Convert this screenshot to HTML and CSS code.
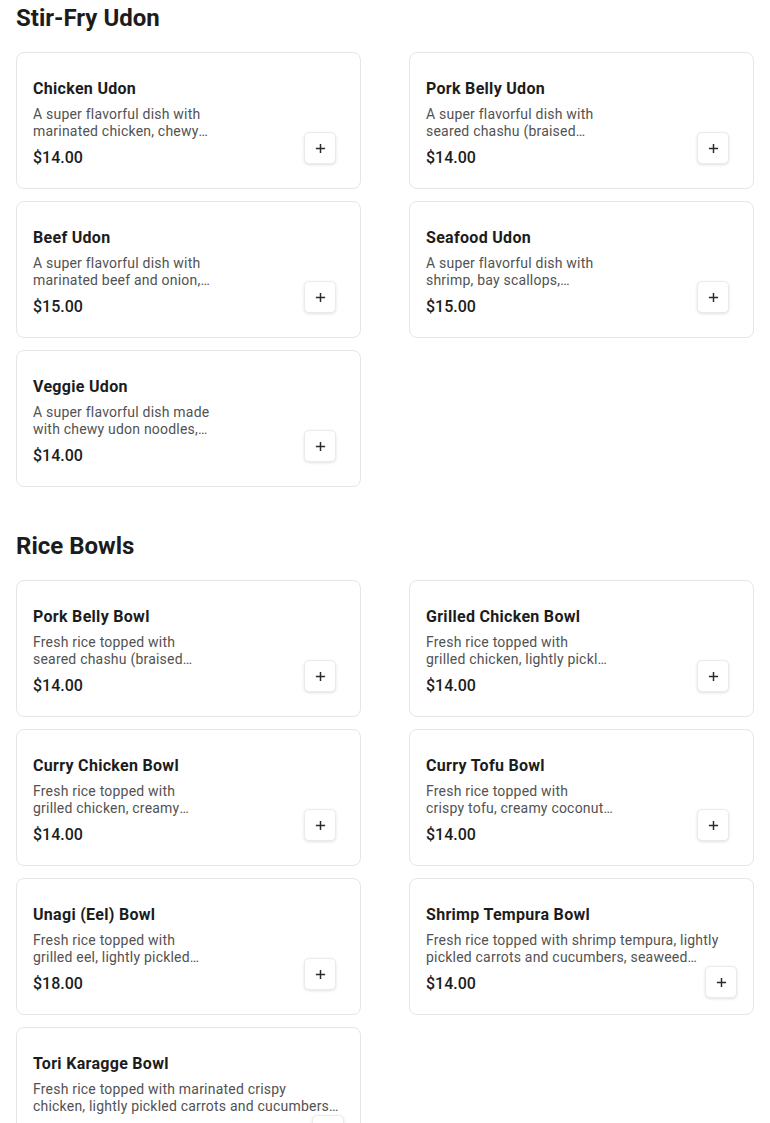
FILE: index.html
```html
<!DOCTYPE html>
<html lang="en">
<head>
<meta charset="utf-8">
<title>Menu</title>
<link rel="stylesheet" href="styles.css">
</head>
<body>
<main class="menu">
  <section class="category">
    <h2 class="category-title">Stir-Fry Udon</h2>
    <div class="item-grid">
      <article class="item-card">
        <div class="item-info">
          <h3 class="item-name">Chicken Udon</h3>
          <p class="item-desc">A super flavorful dish with marinated chicken, chewy udon&nbsp;noodles, cabbage, carrots and onions stir-fried in our savory house sauce.</p>
          <p class="item-price">$14.00</p>
        </div>
        <div class="item-media"><button class="add-btn" aria-label="Add Chicken Udon"><svg viewBox="0 0 12 12" width="11" height="11"><path d="M6 1v10M1 6h10"/></svg></button></div>
      </article>
      <article class="item-card">
        <div class="item-info">
          <h3 class="item-name">Pork Belly Udon</h3>
          <p class="item-desc">A super flavorful dish with seared&nbsp;chashu (braised pork&nbsp;belly), chewy udon noodles, cabbage, carrots and onions.</p>
          <p class="item-price">$14.00</p>
        </div>
        <div class="item-media"><button class="add-btn" aria-label="Add Pork Belly Udon"><svg viewBox="0 0 12 12" width="11" height="11"><path d="M6 1v10M1 6h10"/></svg></button></div>
      </article>
      <article class="item-card">
        <div class="item-info">
          <h3 class="item-name">Beef Udon</h3>
          <p class="item-desc">A super flavorful dish with marinated beef and onion, chewy udon noodles, cabbage and carrots.</p>
          <p class="item-price">$15.00</p>
        </div>
        <div class="item-media"><button class="add-btn" aria-label="Add Beef Udon"><svg viewBox="0 0 12 12" width="11" height="11"><path d="M6 1v10M1 6h10"/></svg></button></div>
      </article>
      <article class="item-card">
        <div class="item-info">
          <h3 class="item-name">Seafood Udon</h3>
          <p class="item-desc">A super flavorful dish with shrimp, bay scallops, calamari,&nbsp;chewy udon noodles and vegetables.</p>
          <p class="item-price">$15.00</p>
        </div>
        <div class="item-media"><button class="add-btn" aria-label="Add Seafood Udon"><svg viewBox="0 0 12 12" width="11" height="11"><path d="M6 1v10M1 6h10"/></svg></button></div>
      </article>
      <article class="item-card">
        <div class="item-info">
          <h3 class="item-name">Veggie Udon</h3>
          <p class="item-desc">A super flavorful dish made with chewy udon noodles, crispy tofu, cabbage, carrots and onions.</p>
          <p class="item-price">$14.00</p>
        </div>
        <div class="item-media"><button class="add-btn" aria-label="Add Veggie Udon"><svg viewBox="0 0 12 12" width="11" height="11"><path d="M6 1v10M1 6h10"/></svg></button></div>
      </article>
    </div>
  </section>

  <section class="category">
    <h2 class="category-title">Rice Bowls</h2>
    <div class="item-grid">
      <article class="item-card">
        <div class="item-info">
          <h3 class="item-name">Pork Belly Bowl</h3>
          <p class="item-desc">Fresh rice topped with seared&nbsp;chashu (braised pork&nbsp;belly), lightly pickled carrots and cucumbers.</p>
          <p class="item-price">$14.00</p>
        </div>
        <div class="item-media"><button class="add-btn" aria-label="Add Pork Belly Bowl"><svg viewBox="0 0 12 12" width="11" height="11"><path d="M6 1v10M1 6h10"/></svg></button></div>
      </article>
      <article class="item-card">
        <div class="item-info">
          <h3 class="item-name">Grilled Chicken Bowl</h3>
          <p class="item-desc">Fresh rice topped with grilled&nbsp;chicken, lightly pickled carrots and cucumbers, seaweed and sesame.</p>
          <p class="item-price">$14.00</p>
        </div>
        <div class="item-media"><button class="add-btn" aria-label="Add Grilled Chicken Bowl"><svg viewBox="0 0 12 12" width="11" height="11"><path d="M6 1v10M1 6h10"/></svg></button></div>
      </article>
      <article class="item-card">
        <div class="item-info">
          <h3 class="item-name">Curry Chicken Bowl</h3>
          <p class="item-desc">Fresh rice topped with grilled&nbsp;chicken, creamy coconut&nbsp;curry sauce, lightly pickled carrots and cucumbers.</p>
          <p class="item-price">$14.00</p>
        </div>
        <div class="item-media"><button class="add-btn" aria-label="Add Curry Chicken Bowl"><svg viewBox="0 0 12 12" width="11" height="11"><path d="M6 1v10M1 6h10"/></svg></button></div>
      </article>
      <article class="item-card">
        <div class="item-info">
          <h3 class="item-name">Curry Tofu Bowl</h3>
          <p class="item-desc">Fresh rice topped with crispy&nbsp;tofu, creamy coconut curry sauce, lightly pickled carrots and cucumbers.</p>
          <p class="item-price">$14.00</p>
        </div>
        <div class="item-media"><button class="add-btn" aria-label="Add Curry Tofu Bowl"><svg viewBox="0 0 12 12" width="11" height="11"><path d="M6 1v10M1 6h10"/></svg></button></div>
      </article>
      <article class="item-card">
        <div class="item-info">
          <h3 class="item-name">Unagi (Eel) Bowl</h3>
          <p class="item-desc">Fresh rice topped with grilled&nbsp;eel, lightly pickled carrots and cucumbers, seaweed and sesame.</p>
          <p class="item-price">$18.00</p>
        </div>
        <div class="item-media"><button class="add-btn" aria-label="Add Unagi (Eel) Bowl"><svg viewBox="0 0 12 12" width="11" height="11"><path d="M6 1v10M1 6h10"/></svg></button></div>
      </article>
      <article class="item-card no-media">
        <div class="item-info">
          <h3 class="item-name">Shrimp Tempura Bowl</h3>
          <p class="item-desc">Fresh rice topped with shrimp tempura, lightly pickled carrots and cucumbers, seaweed furikake and spicy mayo.</p>
          <p class="item-price">$14.00</p>
        </div>
        <button class="add-btn" aria-label="Add Shrimp Tempura Bowl"><svg viewBox="0 0 12 12" width="11" height="11"><path d="M6 1v10M1 6h10"/></svg></button>
      </article>
      <article class="item-card no-media">
        <div class="item-info">
          <h3 class="item-name">Tori Karagge Bowl</h3>
          <p class="item-desc">Fresh rice topped with marinated crispy chicken,&nbsp;lightly pickled carrots and cucumbers with&nbsp;seaweed and sesame.</p>
          <p class="item-price">$14.00</p>
        </div>
        <button class="add-btn" aria-label="Add Tori Karagge Bowl"><svg viewBox="0 0 12 12" width="11" height="11"><path d="M6 1v10M1 6h10"/></svg></button>
      </article>
    </div>
  </section>
</main>
</body>
</html>
```

FILE: styles.css
```css
* {
  box-sizing: border-box;
}

html, body {
  margin: 0;
  padding: 0;
  background: #ffffff;
}

body {
  font-family: Roboto, "Liberation Sans", Arial, sans-serif;
  color: #1c1c1c;
}

.menu {
  padding: 0 16px 40px;
}

.category + .category {
  margin-top: 41px;
}

.category-title {
  margin: 0 0 16px;
  font-size: 24px;
  line-height: 36px;
  font-weight: 700;
  color: #1c1c1c;
}

.item-grid {
  display: grid;
  grid-template-columns: 1fr 1fr;
  column-gap: 48px;
  row-gap: 12px;
}

.item-card {
  position: relative;
  display: flex;
  gap: 16px;
  min-height: 137px;
  padding: 16px;
  border: 1px solid #e6e6e6;
  border-radius: 8px;
  background: #ffffff;
}

.item-info {
  flex: 1;
  min-width: 0;
  padding-top: 8px;
}

.item-name {
  margin: 0;
  font-size: 16px;
  line-height: 24px;
  font-weight: 700;
  letter-spacing: 0.3px;
  color: #1c1c1c;
}

.item-desc {
  margin: 5px 0 0;
  font-size: 14px;
  line-height: 17px;
  letter-spacing: 0.21px;
  color: #525252;
  display: -webkit-box;
  -webkit-line-clamp: 2;
  -webkit-box-orient: vertical;
  overflow: hidden;
}

.item-price {
  margin: 6px 0 0;
  font-size: 16px;
  line-height: 24px;
  font-weight: 500;
  color: #1c1c1c;
}

.item-media {
  position: relative;
  flex: 0 0 107px;
  height: 103px;
}

.add-btn {
  position: absolute;
  right: 8px;
  bottom: 8px;
  width: 32px;
  height: 32px;
  padding: 0;
  display: flex;
  align-items: center;
  justify-content: center;
  background: #ffffff;
  border: 1px solid #ebebeb;
  border-radius: 5px;
  box-shadow: 0 1px 3px rgba(0, 0, 0, 0.12);
  cursor: pointer;
}

.no-media .add-btn {
  right: 16px;
  bottom: 16px;
}

.add-btn svg path {
  fill: none;
  stroke: #2a2a2a;
  stroke-width: 1.6;
}
```
